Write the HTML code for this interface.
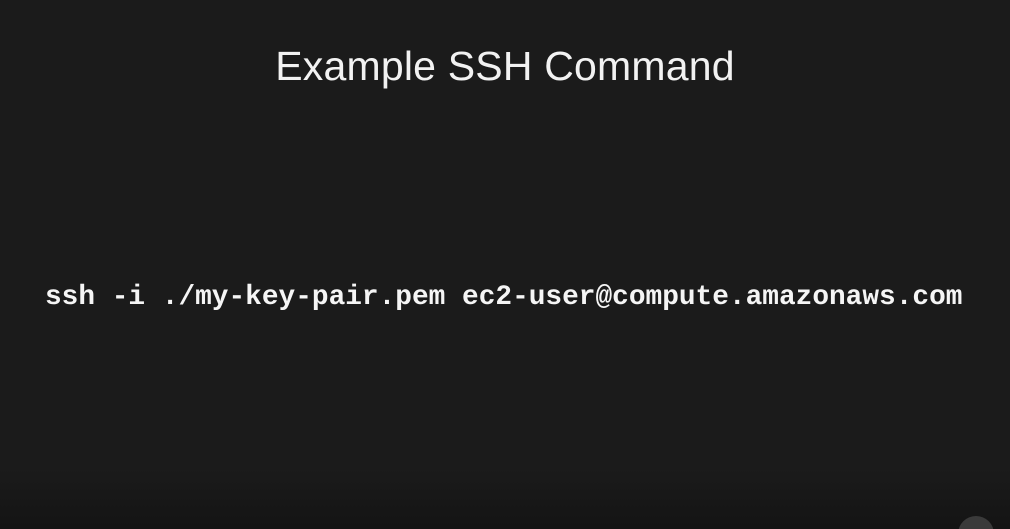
<!DOCTYPE html>
<html><head><style>
html,body{margin:0;padding:0;width:1010px;height:529px;overflow:hidden}
body{background:#1b1b1b;position:relative}
.t{position:absolute;left:0;width:1010px;top:38px;text-align:center;color:#f2f2f2;font:300 41px/56px "Liberation Sans",sans-serif;letter-spacing:0.2px}
.c{position:absolute;left:45px;top:279px;color:#f5f5f5;font:bold 27.8px/38px "Liberation Mono",monospace;white-space:nowrap}
.g{position:absolute;left:0;right:0;bottom:0;height:60px;background:linear-gradient(#1b1b1b00,#141414)}
.b{position:absolute;left:958px;top:516px;width:36px;height:36px;border-radius:50%;background:#3a3a3a}
</style></head><body>
<div class="t">Example SSH Command</div>
<div class="c">ssh -i ./my-key-pair.pem ec2-user@compute.amazonaws.com</div>
<div class="g"></div>
<div class="b"></div>
</body></html>
